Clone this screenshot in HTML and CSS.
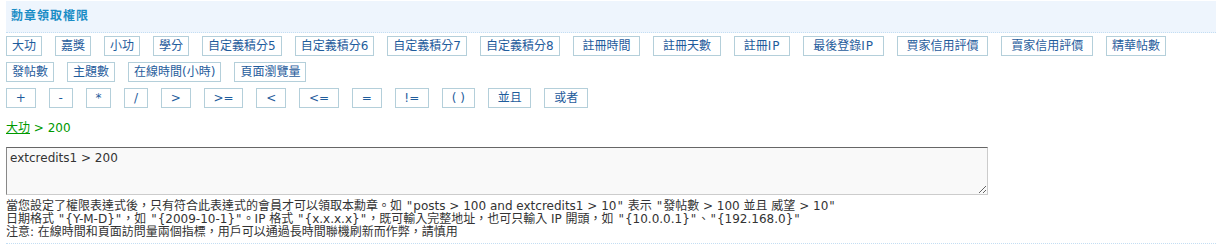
FILE: index.html
```html
<!DOCTYPE html>
<html lang="zh-Hant">
<head>
<meta charset="utf-8">
<title>勳章領取權限</title>
<link rel="stylesheet" href="styles.css">
</head>
<body>
<div class="panel">
  <div class="head"><h3 class="title">勳章領取權限</h3></div>
  <div class="body">
    <div class="btns vars">
      <button type="button" class="btn">大功</button>
      <button type="button" class="btn">嘉獎</button>
      <button type="button" class="btn">小功</button>
      <button type="button" class="btn">學分</button>
      <button type="button" class="btn">自定義積分5</button>
      <button type="button" class="btn">自定義積分6</button>
      <button type="button" class="btn">自定義積分7</button>
      <button type="button" class="btn">自定義積分8</button>
      <button type="button" class="btn"> 註冊時間 </button>
      <button type="button" class="btn"> 註冊天數 </button>
      <button type="button" class="btn"> 註冊<span class="lat">IP</span> </button>
      <button type="button" class="btn"> 最後登錄<span class="lat">IP</span> </button>
      <button type="button" class="btn"> 買家信用評價 </button>
      <button type="button" class="btn"> 賣家信用評價 </button>
      <button type="button" class="btn">精華帖數</button>
      <button type="button" class="btn">發帖數</button>
      <button type="button" class="btn">主題數</button>
      <button type="button" class="btn">在線時間(小時)</button>
      <button type="button" class="btn">頁面瀏覽量</button>
    </div>
    <div class="btns ops">
      <button type="button" class="btn"> + </button>
      <button type="button" class="btn"> - </button>
      <button type="button" class="btn"> * </button>
      <button type="button" class="btn"> / </button>
      <button type="button" class="btn"> &gt; </button>
      <button type="button" class="btn"> &gt;= </button>
      <button type="button" class="btn"> &lt; </button>
      <button type="button" class="btn"> &lt;= </button>
      <button type="button" class="btn"> = </button>
      <button type="button" class="btn"> != </button>
      <button type="button" class="btn"> ( ) </button>
      <button type="button" class="btn"> 並且 </button>
      <button type="button" class="btn"> 或者 </button>
    </div>
    <div class="preview"><a href="#" class="preview-link">大功</a> &gt; 200</div>
    <textarea class="expr">extcredits1 &gt; 200</textarea>
    <div class="tips">
      <p class="tip">當您設定了權限表達式後，只有符合此表達式的會員才可以領取本勳章。如 <span class="q">"</span>posts &gt; 100 and extcredits1 &gt; 10<span class="q">"</span> 表示 <span class="q">"</span>發帖數 &gt; 100 並且 威望 &gt; 10<span class="q">"</span></p>
      <p class="tip">日期格式 <span class="q">"</span>{Y-M-D}<span class="q">"</span>，如 <span class="q">"</span>{2009-10-1}<span class="q">"</span>。IP 格式 <span class="q">"</span>{x.x.x.x}<span class="q">"</span>，既可輸入完整地址，也可只輸入 IP 開頭，如 <span class="q">"</span>{10.0.0.1}<span class="q">"</span>、<span class="q">"</span>{192.168.0}<span class="q">"</span></p>
      <p class="tip">注意: 在線時間和頁面訪問量兩個指標，用戶可以通過長時間聯機刷新而作弊，請慎用</p>
    </div>
  </div>
</div>
</body>
</html>
```
FILE: styles.css
```css
html, body {
  margin: 0;
  padding: 0;
  background: #fff;
}

body {
  font-family: "DejaVu Sans", "Noto Sans CJK TC", sans-serif;
  font-size: 12px;
  color: #333;
}

.panel {
  margin: 1px 0 0 6px;
}

.head {
  height: 31px;
  background: #eef5fd;
  border-bottom: 1px dotted #c4def3;
}

.title {
  margin: 0;
  padding-left: 5px;
  font-size: 12px;
  line-height: 31px;
  font-weight: bold;
  letter-spacing: 1px;
  color: #1a8dc6;
}

.body {
  padding: 3px 0 4px 0;
  border-bottom: 1px dotted #c4def3;
}

.btns {
  display: flex;
  flex-wrap: wrap;
}

.vars {
  column-gap: 13px;
  row-gap: 6px;
}

.ops {
  margin-top: 6px;
  column-gap: 13px;
}

.btn {
  box-sizing: border-box;
  height: 20px;
  margin: 0;
  padding: 0 5px;
  border: 1px solid #b4cfda;
  background: #fff;
  color: #1f5c9c;
  font-family: "DejaVu Sans", "Noto Sans CJK TC", sans-serif;
  font-size: 12px;
  line-height: 18px;
  white-space: pre;
  cursor: pointer;
}

.lat {
  letter-spacing: 1px;
}

.preview {
  margin-top: 10px;
  line-height: 20px;
  color: #009900;
}

.preview-link {
  color: #009900;
  text-decoration: underline;
}

.expr {
  display: block;
  box-sizing: border-box;
  width: 982px;
  height: 48px;
  margin: 9px 0 0 0;
  padding: 2px 3px;
  border: 1px solid;
  border-color: #666 #ccc #ccc #888;
  background: #f9f9f9;
  color: #333;
  font-family: "DejaVu Sans", "Noto Sans CJK TC", sans-serif;
  font-size: 12px;
  line-height: 16px;
}

.tips {
  margin-top: 5px;
}

.tip {
  margin: 0;
  line-height: 13px;
}

.q {
  padding: 0 1px;
}
```
